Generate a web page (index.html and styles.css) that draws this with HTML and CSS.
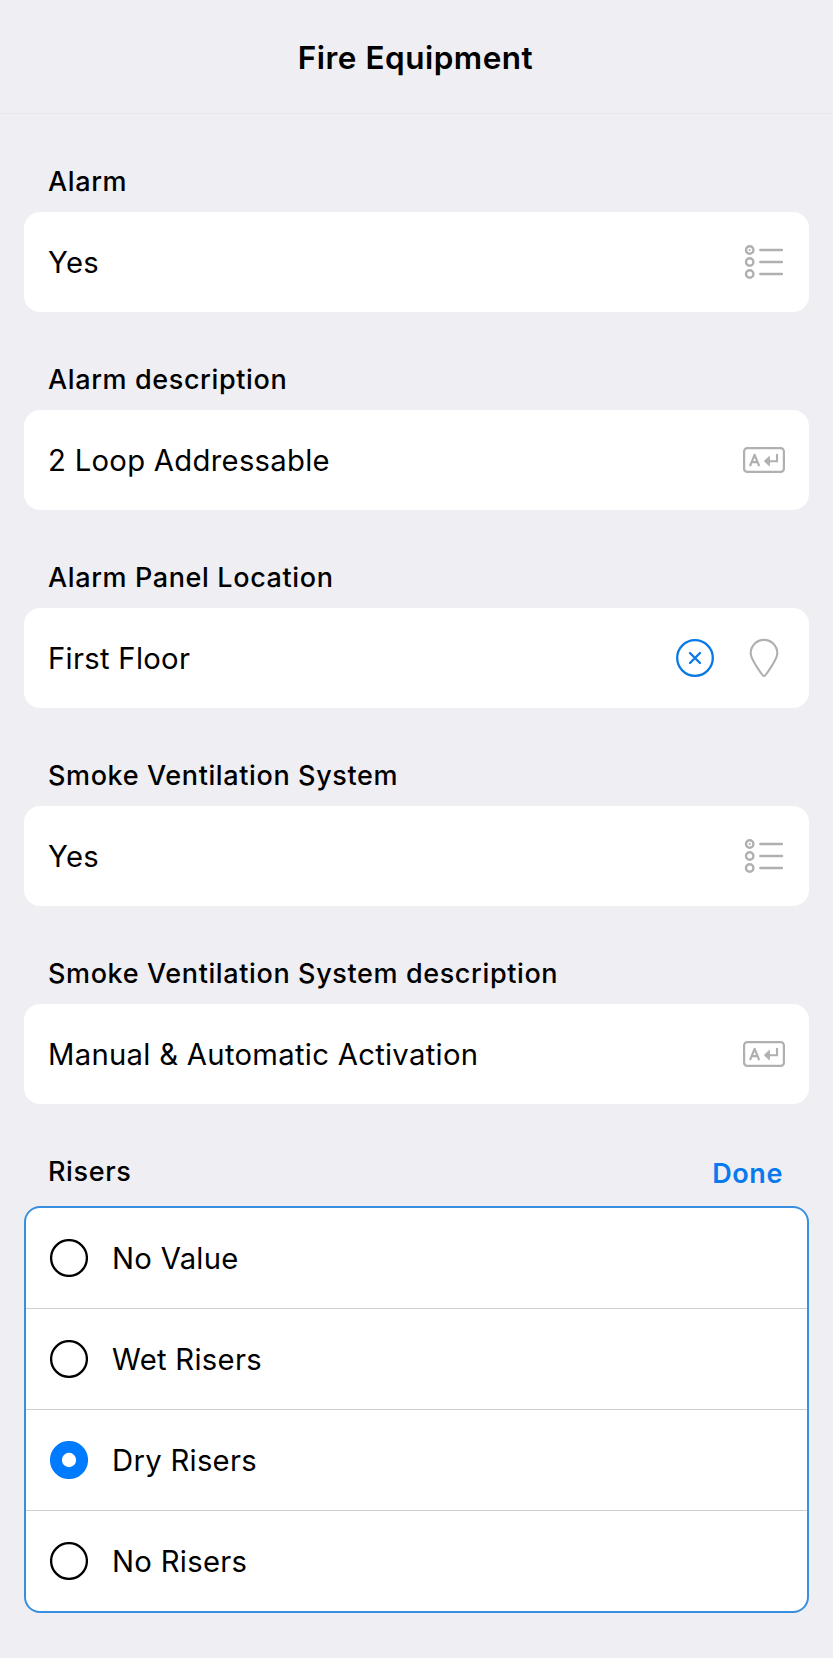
FILE: index.html
```html
<!DOCTYPE html>
<html lang="en">
<head>
<meta charset="utf-8">
<title>Fire Equipment</title>
<link rel="stylesheet" href="styles.css">
</head>
<body>
<svg class="defs" aria-hidden="true">
  <symbol id="list" viewBox="0 0 42 36">
    <g fill="none" stroke="#b0b0b0" stroke-width="2.4">
      <circle cx="5.7" cy="6" r="3.7"/><circle cx="5.7" cy="18" r="3.7"/><circle cx="5.7" cy="30" r="3.7"/>
      <path d="M16.3 6h21.6M16.3 18h21.6M16.3 30h21.6" stroke-linecap="round"/>
    </g>
    <circle cx="5.7" cy="6" r="1.1" fill="#b0b0b0"/>
  </symbol>
  <symbol id="text" viewBox="0 0 42 26">
    <rect x="1.1" y="1.1" width="39.8" height="23.8" rx="3.2" fill="none" stroke="#b0b0b0" stroke-width="2.2"/>
    <path d="M7.3 18.3 11.6 7.8 15.9 18.3M8.8 15.2h5.6" fill="none" stroke="#b0b0b0" stroke-width="2.2" stroke-linejoin="round" stroke-linecap="round"/>
    <path d="M34 7v7.3h-9" fill="none" stroke="#b0b0b0" stroke-width="2.1"/>
    <path d="M21.2 14.1 26.5 9.2V19Z" fill="#b0b0b0" stroke="#b0b0b0" stroke-width=".8" stroke-linejoin="round"/>
  </symbol>
  <symbol id="radio" viewBox="0 0 38 38">
    <circle cx="19" cy="19" r="17.9" fill="none" stroke="#000" stroke-width="2.3"/>
  </symbol>
  <symbol id="radio-on" viewBox="0 0 38 38">
    <circle cx="19" cy="19" r="13.1" fill="none" stroke="#007aff" stroke-width="11.9"/>
  </symbol>
</svg>
<header class="header"><h1 class="title">Fire Equipment</h1></header>
<main class="form">
  <section class="field">
    <h2 class="label">Alarm</h2>
    <div class="card"><span class="value">Yes</span><svg class="icon-list"><use href="#list"/></svg></div>
  </section>
  <section class="field">
    <h2 class="label">Alarm description</h2>
    <div class="card"><span class="value">2 Loop Addressable</span><svg class="icon-text"><use href="#text"/></svg></div>
  </section>
  <section class="field">
    <h2 class="label">Alarm Panel Location</h2>
    <div class="card"><span class="value">First Floor</span>
      <svg class="icon-clear" viewBox="0 0 38 38" fill="none" stroke="#087ae6" stroke-width="2.3"><circle cx="19" cy="19" r="17.8"/><path d="m14 14 10 10M24 14 14 24" stroke-linecap="round"/></svg>
      <svg class="icon-pin" viewBox="0 0 30 40" fill="none" stroke="#b0b0b0" stroke-width="2.1"><path d="M15 38.2C14 38.2 1.7 21.5 1.7 15.2a13.3 13.3 0 0 1 26.6 0C28.3 21.5 16 38.2 15 38.2Z"/></svg>
    </div>
  </section>
  <section class="field">
    <h2 class="label">Smoke Ventilation System</h2>
    <div class="card"><span class="value">Yes</span><svg class="icon-list"><use href="#list"/></svg></div>
  </section>
  <section class="field">
    <h2 class="label">Smoke Ventilation System description</h2>
    <div class="card"><span class="value">Manual &amp; Automatic Activation</span><svg class="icon-text"><use href="#text"/></svg></div>
  </section>
  <section class="field">
    <div class="label-row"><h2 class="label">Risers</h2><button class="done">Done</button></div>
    <ul class="options">
      <li class="option"><svg class="radio"><use href="#radio"/></svg><span class="value">No Value</span></li>
      <li class="option"><svg class="radio"><use href="#radio"/></svg><span class="value">Wet Risers</span></li>
      <li class="option"><svg class="radio"><use href="#radio-on"/></svg><span class="value">Dry Risers</span></li>
      <li class="option"><svg class="radio"><use href="#radio"/></svg><span class="value">No Risers</span></li>
    </ul>
  </section>
</main>
</body>
</html>
```
FILE: styles.css
```css
* { box-sizing: border-box; }
body { margin: 0; min-height: 1658px; background: #eeeef3; color: #000; font-family: Inter, "Liberation Sans", sans-serif; }
.defs { display: none; }
.header { height: 114px; border-bottom: 1px solid #e8e8eb; padding: 38px 2px 0 0; text-align: center; }
.title { margin: 0; font-size: 31.5px; line-height: 40px; font-weight: 600; letter-spacing: 0.5px; }
.form { display: flex; flex-direction: column; gap: 51px; padding: 51px 24px 44px; }
.label { margin: 0 0 15px; padding-left: 24px; font-size: 27px; line-height: 34px; height: 32px; font-weight: 500; letter-spacing: 0.62px; white-space: nowrap; }
.card { display: flex; align-items: center; height: 100px; padding: 0 24px; border-radius: 16px; background: #fff; }
.value { flex: 1; padding-top: 2px; font-size: 29.25px; line-height: 40px; letter-spacing: 0.29px; white-space: nowrap; }
.icon-list { width: 42px; height: 36px; margin-right: -1px; }
.icon-text { width: 42px; height: 26px; }
.icon-clear { width: 38px; height: 38px; margin-right: 35px; }
.icon-pin { width: 30px; height: 40px; margin-right: 6px; }
.label-row { display: flex; justify-content: space-between; height: 51px; padding-right: 26px; }
.done { margin: 2px 0 0; padding: 0; border: 0; background: none; color: #087aee; height: 34px; font: 600 27px/34px Inter, sans-serif; letter-spacing: 0.6px; }
.options { margin: 0; padding: 0; list-style: none; border: 2px solid #388fe0; border-radius: 16px; background: #fff; }
.option { display: flex; align-items: center; gap: 24px; height: 101px; padding: 0 24px; border-bottom: 1px solid #cfcfd3; }
.option:last-child { height: 100px; border: 0; }
.radio { width: 38px; height: 38px; }
```
